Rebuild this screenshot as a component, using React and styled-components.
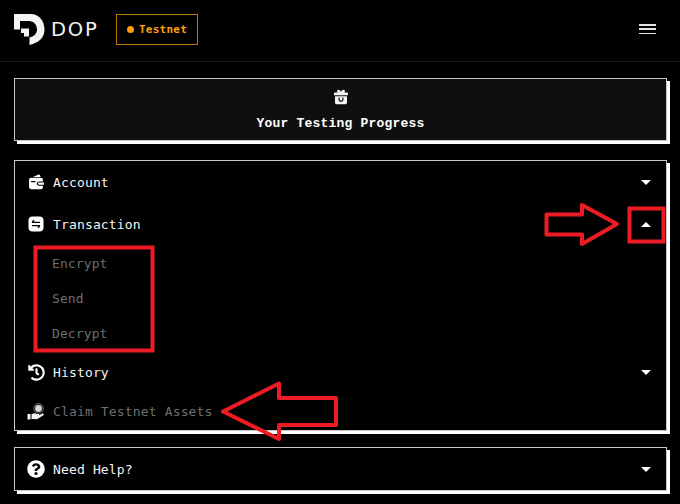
import React from "react";
import styled, { createGlobalStyle } from "styled-components";
import { FaHistory, FaQuestionCircle } from "react-icons/fa";

const Global = createGlobalStyle`
  html, body { margin: 0; padding: 0; background: #000; }
  * { box-sizing: border-box; }
`;

const Page = styled.div`
  position: relative;
  width: 680px;
  height: 504px;
  overflow: hidden;
  background: #000;
  font-family: "DejaVu Sans Mono", "Liberation Mono", monospace;
  color: #fff;
`;
const Header = styled.header`
  height: 62px;
  border-bottom: 1px solid #1c1c1c;
  display: flex;
  align-items: center;
  padding: 0 24px 3px 14px;
`;
const Brand = styled.div`
  display: flex;
  align-items: center;
  gap: 6px;
  width: 102px;
`;
const BrandName = styled.span`
  font-family: "DejaVu Sans", sans-serif;
  font-size: 19.5px;
  font-weight: 400;
  letter-spacing: 1.8px;
  color: #f2f2f2;
`;
const Badge = styled.div`
  width: 82px;
  height: 31px;
  border: 1px solid #b87a08;
  display: flex;
  align-items: center;
  gap: 5px;
  padding-left: 10px;
  color: #ff9f0a;
  font-size: 11px;
  font-weight: 700;
  letter-spacing: 0.25px;
`;
const Dot = styled.span`
  width: 7px;
  height: 7px;
  border-radius: 50%;
  background: #ff9f0a;
`;
const Burger = styled.button`
  margin-left: auto;
  width: 17px;
  height: 10px;
  padding: 0;
  border: 0;
  background: transparent;
  display: flex;
  flex-direction: column;
  justify-content: space-between;
  span { display: block; height: 1.5px; background: #e4e4e4; }
`;
const Main = styled.main`
  padding: 16px 13px 0 14px;
  display: flex;
  flex-direction: column;
`;
const Card = styled.section`
  border: 1px solid #c8c8c8;
  box-shadow: 3px 3px 0 #fff;
  background: ${(p) => p.$bg || "#000"};
  margin-bottom: ${(p) => p.$gap || 0}px;
`;
const Progress = styled(Card)`
  height: 63px;
  display: flex;
  flex-direction: column;
  align-items: center;
  padding-top: 10px;
  gap: 11px;
`;
const Title = styled.h1`
  margin: 0;
  font-size: 13px;
  line-height: 15px;
  font-weight: 700;
  letter-spacing: 0.2px;
  color: #fff;
  font-family: "Liberation Mono", monospace;
`;
const Row = styled.div`
  height: ${(p) => p.$h}px;
  padding: ${(p) => p.$top || 0}px 15px 0 12px;
  display: flex;
  align-items: center;
  gap: 8px;
  font-size: 13px;
  letter-spacing: 0.15px;
  color: ${(p) => (p.$dim ? "#6e6e6e" : "#f4f4f4")};
`;
const IconSlot = styled.span`
  width: 18px;
  height: 18px;
  display: flex;
  align-items: center;
  justify-content: center;
  color: #fff;
`;
const Label = styled.span`
  flex: 1;
`;
const Caret = styled.span`
  width: 0;
  height: 0;
  border-left: 5px solid transparent;
  border-right: 5px solid transparent;
  ${(p) => (p.$up ? "border-bottom: 5px solid #fff;" : "border-top: 5px solid #fff;")}
`;
const Sub = styled.div`
  height: 35px;
  padding: 2px 0 0 37px;
  display: flex;
  align-items: center;
  font-size: 13px;
  letter-spacing: 0.1px;
  color: #6a6e70;
`;
const Overlay = styled.svg`
  position: absolute;
  inset: 0;
  pointer-events: none;
`;

const Logo = () => (
  <svg width="31" height="31" viewBox="0 0 31 31">
    <path
      fill="#f4f4f4"
      d="M0 0H17C25 0 30.500 7 30.500 15.500C30.500 23.500 25 29 15.500 31V23.500C20 22.500 23 19.500 23 15.500C23 10.500 19.500 7 15 7H6V15.500H0Z"
    />
    <path fill="#f4f4f4" d="M7 14.500H15V22.500H10V19H7Z" />
  </svg>
);
const Gift = () => (
  <svg width="16" height="16" viewBox="0 0 16 16" fill="#f4f4f4">
    <path d="M5.500.8C4 .8 3.500 2.600 4.800 3.500H2.200C1.500 3.500 1 4 1 4.700V6.300H15V4.700C15 4 14.500 3.500 13.800 3.500H11.200C12.500 2.600 12 .8 10.500.8C9.300.8 8.500 1.800 8 3 7.500 1.800 6.700.8 5.500.8Z" />
    <path fillRule="evenodd" d="M2 7.300H14V13.500C14 14.500 13.300 15.200 12.300 15.200H3.700C2.700 15.200 2 14.500 2 13.500ZM5.500 8.500V10.500C5.500 12 6.500 12.800 8 12.800S10.500 12 10.500 10.500V8.500H9.300V10.500C9.300 11.300 8.800 11.700 8 11.700S6.700 11.300 6.700 10.500V8.500Z" />
  </svg>
);
const Wallet = () => (
  <svg width="17" height="17" viewBox="0 0 16 16" fill="#fff">
    <path d="M2 4 9.500.6C10.500.2 11.200.7 11.500 1.600L12 3H3.500Z" />
    <path fillRule="evenodd" d="M2.500 3.800H12.500C13.500 3.800 14 4.400 14 5.300V7H10.500C9 7 8.200 8 8.200 9S9 11 10.500 11H14V12.700C14 13.700 13.400 14.300 12.500 14.300H3C2 14.300 1 13.500 1 12.300V5.300C1 4.400 1.600 3.800 2.500 3.800ZM3 6.700V7.800H7V6.700Z" />
    <path d="M10.500 8H15V10H10.500C9.800 10 9.300 9.600 9.300 9S9.800 8 10.500 8Z" />
  </svg>
);
const Transfer = () => (
  <svg width="16" height="16" viewBox="0 0 16 16">
    <rect x="0.500" y="0.500" width="15" height="15" rx="4" fill="#fff" />
    <path d="M4 6.300H12M4 6.300 6.200 4.300M12 9.700H4M12 9.700 9.800 11.700" stroke="#000" strokeWidth="1.200" fill="none" />
  </svg>
);
const Claim = () => (
  <svg width="18" height="18" viewBox="0 0 18 18">
    <circle cx="11.500" cy="5.500" r="4.800" fill="none" stroke="#9a9a9a" strokeWidth="0.800" />
    <circle cx="11.500" cy="5.500" r="3.400" fill="#d8d8d8" />
    <rect x="0.500" y="11" width="3" height="5.500" fill="#f4f4f4" />
    <path d="M4.500 11.500C6.500 10 8 10 9.500 11H11.500C12.500 11 12.500 12.500 11.500 12.500H8.500 11.500L15.500 10.500C16.800 10.200 17.300 11.500 16.300 12.200L11 15.800C10 16.300 9 16.300 8 16H4.500Z" fill="#f4f4f4" />
  </svg>
);

const RED = "#ed1c24";

export default function App() {
  return (
    <Page>
      <Global />
      <Header>
        <Brand>
          <Logo />
          <BrandName>DOP</BrandName>
        </Brand>
        <Badge>
          <Dot />
          Testnet
        </Badge>
        <Burger aria-label="Menu">
          <span />
          <span />
          <span />
        </Burger>
      </Header>
      <Main>
        <Progress $bg="#0f0f0f" $gap={19}>
          <Gift />
          <Title>Your Testing Progress</Title>
        </Progress>
        <Card $gap={16}>
          <Row $h={42}>
            <IconSlot><Wallet /></IconSlot>
            <Label>Account</Label>
            <Caret />
          </Row>
          <Row $h={42}>
            <IconSlot><Transfer /></IconSlot>
            <Label>Transaction</Label>
            <Caret $up />
          </Row>
          <Sub>Encrypt</Sub>
          <Sub>Send</Sub>
          <Sub>Decrypt</Sub>
          <Row $h={43} $top={2}>
            <IconSlot><FaHistory size={17} /></IconSlot>
            <Label>History</Label>
            <Caret />
          </Row>
          <Row $h={37} $dim>
            <IconSlot><Claim /></IconSlot>
            <Label>Claim Testnet Assets</Label>
          </Row>
        </Card>
        <Card>
          <Row $h={42}>
            <IconSlot><FaQuestionCircle size={18} /></IconSlot>
            <Label>Need Help?</Label>
            <Caret />
          </Row>
        </Card>
      </Main>
      <Overlay width="680" height="504" viewBox="0 0 680 504" fill="none" stroke={RED} strokeWidth="4">
        <rect x="35.500" y="247.500" width="117" height="103" />
        <rect x="629.500" y="208.500" width="34" height="33" />
        <path d="M546.500 214.500H582V205L617 224 582 244V234.500H546.500Z" strokeLinejoin="round" />
        <path d="M223 411.500 279 383.500V398H336V425H279V439Z" strokeLinejoin="round" />
      </Overlay>
    </Page>
  );
}
